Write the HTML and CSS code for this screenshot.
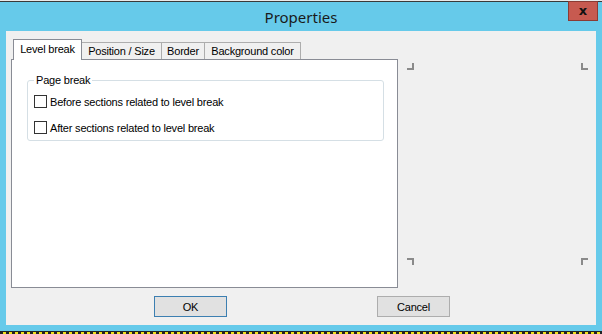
FILE: index.html
```html
<!DOCTYPE html>
<html lang="en">
<head>
    <meta charset="UTF-8">
    <title>Properties</title>
    <link rel="stylesheet" href="styles.css">
</head>
<body>

    <div class="top-strip"></div>

    <div class="window">
        <!-- Barra de titulo -->
        <div class="titlebar">
            <span class="title">Properties</span>
            <div class="close-btn">x</div>
        </div>

        <div class="client">
            <div class="main-row">

                <!-- Abas -->
                <div class="tab-control">
                    <div class="tabs">
                        <div class="tab active">Level break</div>
                        <div class="tab">Position / Size</div>
                        <div class="tab">Border</div>
                        <div class="tab">Background color</div>
                    </div>
                    <div class="tab-panel">
                        <fieldset class="group">
                            <legend>Page break</legend>
                            <label class="check"><span class="box"></span>Before sections related to level break</label>
                            <label class="check"><span class="box"></span>After sections related to level break</label>
                        </fieldset>
                    </div>
                </div>

                <!-- Area de preview -->
                <div class="preview">
                    <div class="marks-row">
                        <span class="mark tl"></span>
                        <span class="mark tr"></span>
                    </div>
                    <div class="marks-row">
                        <span class="mark bl"></span>
                        <span class="mark br"></span>
                    </div>
                </div>
            </div>

            <div class="buttons">
                <div class="button default">OK</div>
                <div class="button">Cancel</div>
            </div>
        </div>
    </div>

    <div class="bottom-strip"></div>

</body>
</html>
```

FILE: styles.css
```css
body {
    margin: 0;
    width: 602px;
    height: 334px;
    overflow: hidden;
    background: #66caea;
    font-family: "Liberation Sans", Arial, sans-serif;
    font-size: 11px;
    letter-spacing: -0.2px;
    color: #000;
}

.top-strip {
    height: 1px;
    background: #e9e9e9;
    border-bottom: 1px solid #3a3a3a;
}

.window {
    display: flex;
    flex-direction: column;
    height: 329px;
}

.titlebar {
    height: 29px;
    display: flex;
    align-items: center;
    justify-content: center;
    position: relative;
}

.title {
    font-family: "Noto Sans", "Open Sans", sans-serif;
    font-size: 15px;
    letter-spacing: 0;
    color: #1a1a1a;
    margin-top: 1px;
}

.close-btn {
    position: absolute;
    top: -1px;
    right: 4px;
    width: 30px;
    height: 20px;
    background: #c75a50;
    border: 1px solid #8b3b34;
    display: flex;
    align-items: center;
    justify-content: center;
    font-family: "DejaVu Sans", sans-serif;
    font-weight: bold;
    font-size: 13px;
    letter-spacing: 0;
    line-height: 1;
    color: #111;
    padding-bottom: 2px;
    box-sizing: border-box;
}

.client {
    margin: 0 6px;
    height: 294px;
    background: #f0f0f0;
    display: flex;
    flex-direction: column;
}

.main-row {
    display: flex;
    padding: 8px 0 0 5px;
    height: 249px;
}

.tab-control {
    width: 387px;
    display: flex;
    flex-direction: column;
}

.tabs {
    display: flex;
    align-items: flex-end;
    padding-left: 2px;
    height: 20px;
    position: relative;
    z-index: 1;
}

.tab {
    height: 17px;
    box-sizing: border-box;
    border: 1px solid #adadad;
    border-bottom: none;
    border-left: none;
    background: #f0f0f0;
    line-height: 16px;
    text-align: center;
    white-space: nowrap;
}

.tab.active {
    width: 69px;
    height: 21px;
    margin-bottom: -1px;
    border-left: 1px solid #898c95;
    border-color: #898c95;
    background: #fff;
    line-height: 18px;
}

.tab:nth-child(2) { width: 80px; }
.tab:nth-child(3) { width: 43px; }
.tab:nth-child(4) { width: 96px; }

.tab-panel {
    flex: 1;
    background: #fff;
    border: 1px solid #898c95;
    padding: 13px 13px 0 15px;
}

.group {
    margin: 0;
    border: 1px solid #d5dfe5;
    border-radius: 3px;
    padding: 8px 6px 6px 6px;
}

.group legend {
    padding: 0 2px;
    margin-left: 0;
    line-height: 14px;
}

.check {
    display: flex;
    align-items: center;
    height: 13px;
    margin-bottom: 13px;
    white-space: nowrap;
}

.check:last-child {
    margin-bottom: 0;
}

.box {
    width: 11px;
    height: 11px;
    border: 1px solid #333;
    background: #fff;
    margin-right: 3px;
}

.preview {
    width: 181px;
    height: 202px;
    margin: 24px 0 0 9px;
    display: flex;
    flex-direction: column;
    justify-content: space-between;
}

.marks-row {
    display: flex;
    justify-content: space-between;
}

.mark {
    width: 5px;
    height: 5px;
    border: 0 solid #8a8a8a;
}

.mark.tl { border-right-width: 2px; border-bottom-width: 2px; }
.mark.tr { border-left-width: 2px; border-bottom-width: 2px; }
.mark.bl { border-right-width: 2px; border-top-width: 2px; }
.mark.br { border-left-width: 2px; border-top-width: 2px; }

.buttons {
    display: flex;
    padding: 8px 0 0 148px;
    gap: 150px;
}

.button {
    width: 73px;
    height: 21px;
    box-sizing: border-box;
    border: 1px solid #adadad;
    background: #e1e1e1;
    display: flex;
    align-items: center;
    justify-content: center;
}

.button.default {
    border-color: #3c7fb1;
}

.bottom-strip {
    height: 2px;
    border-top: 1px solid #222;
    background: repeating-linear-gradient(to right, #222 0 3px, #f2e21c 3px 6px);
}
```
